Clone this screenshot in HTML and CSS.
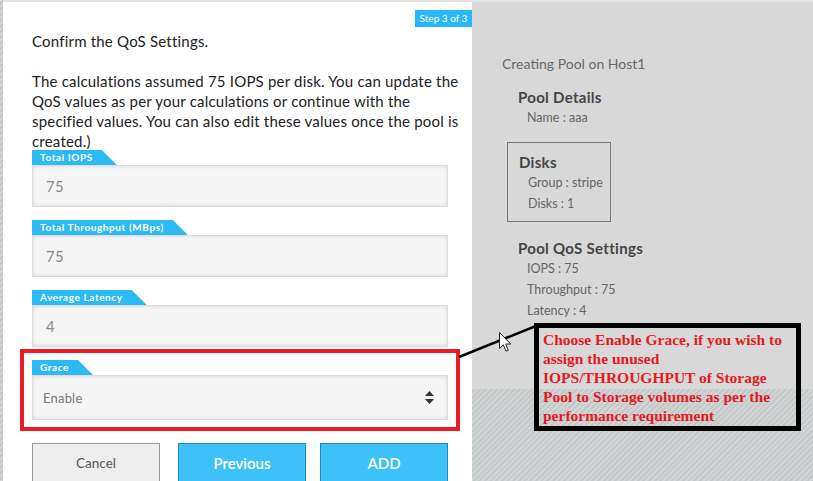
FILE: index.html
```html
<!DOCTYPE html>
<html lang="en">
<head>
<meta charset="utf-8">
<title>Create Pool - Step 3</title>
<link rel="stylesheet" href="styles.css">
</head>
<body>
<div class="modal">
  <section class="wizard">
    <span class="step">Step 3 of 3</span>
    <p class="intro">Confirm the QoS Settings.<br><br>The calculations assumed 75 IOPS per disk. You can update the<br>QoS values as per your calculations or continue with the<br>specified values. You can also edit these values once the pool is<br>created.)</p>
    <div class="fields">
      <div class="field">
        <div class="tab">Total IOPS</div>
        <div class="input">75</div>
      </div>
      <div class="field">
        <div class="tab">Total Throughput (MBps)</div>
        <div class="input">75</div>
      </div>
      <div class="field">
        <div class="tab">Average Latency</div>
        <div class="input">4</div>
      </div>
      <div class="highlight">
        <div class="field">
          <div class="tab">Grace</div>
          <div class="input select">
            <span>Enable</span>
            <svg class="arrows" width="9" height="13" viewBox="0 0 9 13"><path d="M4.5 0 L9 5 L0 5 Z M0 8 L9 8 L4.5 13 Z" fill="#333"/></svg>
          </div>
        </div>
      </div>
    </div>
    <div class="actions">
      <button class="btn cancel">Cancel</button>
      <button class="btn primary prev">Previous</button>
      <button class="btn primary add">ADD</button>
    </div>
  </section>
  <aside class="summary">
    <p class="summary-title">Creating Pool on Host1</p>
    <div class="group">
      <h3>Pool Details</h3>
      <p>Name : aaa</p>
    </div>
    <div class="group boxed">
      <h3>Disks</h3>
      <p>Group : stripe</p>
      <p>Disks : 1</p>
    </div>
    <div class="group qos">
      <h3>Pool QoS Settings</h3>
      <p>IOPS : 75</p>
      <p>Throughput : 75</p>
      <p>Latency : 4</p>
    </div>
  </aside>
  <svg class="connector" width="813" height="481" viewBox="0 0 813 481">
    <line x1="459" y1="357" x2="536" y2="326" stroke="#000" stroke-width="2.5"/>
  </svg>
  <svg class="cursor" width="13" height="21" viewBox="0 0 13 21">
    <path d="M0.5 0.5 L0.5 16.5 L4.3 12.8 L7 19.2 L9.3 18.2 L6.7 12 L11.8 12 Z" fill="#fff" stroke="#222" stroke-width="1" stroke-linejoin="round"/>
  </svg>
  <div class="callout">Choose Enable Grace, if you wish to<br>assign the unused<br>IOPS/THROUGHPUT of Storage<br>Pool to Storage volumes as per the<br>performance requirement</div>
</div>
</body>
</html>
```

FILE: styles.css
```css
* { box-sizing: border-box; }

html, body {
  margin: 0;
  padding: 0;
}

body {
  width: 813px;
  height: 481px;
  overflow: hidden;
  font-family: "Lato", "Open Sans", sans-serif;
  background: repeating-linear-gradient(135deg, #d2d5d5 0 2px, #c4c8c8 2px 4px);
}

.modal {
  position: relative;
  display: flex;
  align-items: flex-start;
  margin-left: 3px;
  height: 481px;
  border-top: 2px solid #e3e3e3;
}

.wizard {
  position: relative;
  width: 469px;
  height: 479px;
  background: #fff;
  padding: 29px 0 0 29px;
}

.step {
  position: absolute;
  top: 8px;
  right: 0;
  height: 17px;
  width: 57px;
  background: #29b8f5;
  color: #fff;
  font-size: 10px;
  line-height: 17px;
  text-align: center;
}

.intro {
  margin: 0;
  font-size: 15px;
  letter-spacing: 0.2px;
  line-height: 20px;
  color: #222;
  white-space: nowrap;
}

.fields {
  margin-top: -1px;
}

.field {
  display: flex;
  flex-direction: column;
  align-items: flex-start;
  width: 416px;
  margin-bottom: 13px;
}

.tab {
  height: 15px;
  padding: 0 24px 0 8px;
  background: #2bbaf4;
  color: #fff;
  font-size: 10px;
  font-weight: 700;
  letter-spacing: 0.6px;
  line-height: 15px;
  clip-path: polygon(0 0, calc(100% - 15px) 0, 100% 100%, 0 100%);
}

.input {
  display: flex;
  align-items: center;
  align-self: stretch;
  height: 42px;
  padding: 0 13px;
  background: #f5f5f5;
  border: 1px solid #dcdcdc;
  box-shadow: inset 0 0 4px rgba(0, 0, 0, 0.12);
  color: #8a8a8a;
  font-size: 15px;
  letter-spacing: 0.3px;
}

.highlight {
  width: 440px;
  margin: -11px 0 0 -12px;
  padding: 7px 8px 7px 8px;
  border: 4px solid #ed1c24;
}

.highlight .field {
  margin-bottom: 0;
}

.select {
  justify-content: space-between;
  height: 45px;
  padding: 0 10px 0 10px;
  color: #777;
  font-size: 13px;
  letter-spacing: 0.2px;
}

.arrows {
  display: block;
  margin-right: 3px;
}

.actions {
  display: flex;
  margin-top: 12px;
}

.btn {
  width: 128px;
  height: 42px;
  font-family: inherit;
  font-size: 13px;
  padding: 0 0 2px;
}

.cancel {
  background: #eeeeee;
  border: 1px solid #999;
  color: #555;
  font-size: 13.5px;
}

.primary {
  background: #3ec1f8;
  border: 1px solid #1b8bc3;
  color: #fff;
  font-size: 15px;
  font-weight: 600;
}

.prev { margin-left: 18px; }
.add { margin-left: 14px; }

.summary {
  width: 341px;
  height: 387px;
  background: #d8d8d8;
  padding: 52px 0 0 30px;
  color: #666;
}

.summary-title {
  margin: 0 0 13px;
  font-size: 14px;
  line-height: 20px;
  color: #6a6a6a;
}

.group {
  padding-left: 16px;
}

.group h3 {
  margin: 0;
  font-size: 15px;
  letter-spacing: 0.3px;
  line-height: 20px;
  font-weight: 700;
  color: #454545;
}

.group p {
  margin: 0;
  padding-left: 9px;
  font-size: 12.5px;
  line-height: 21px;
  color: #666;
}

.group.boxed {
  width: 104px;
  margin: 14px 0 0 5px;
  padding: 9px 0 7px 11px;
  border: 1px solid #777;
}

.group.qos {
  margin-top: 16px;
}

.connector {
  position: absolute;
  top: -2px;
  left: -3px;
  pointer-events: none;
}

.cursor {
  position: absolute;
  left: 496px;
  top: 330px;
}

.callout {
  position: absolute;
  left: 531px;
  top: 321px;
  width: 267px;
  height: 108px;
  border: 5px solid #000;
  padding: 2px 0 0 4px;
  font-family: "Liberation Serif", "Times New Roman", serif;
  font-weight: 700;
  font-size: 15.5px;
  line-height: 19px;
  color: #e8191f;
  white-space: nowrap;
}
```
